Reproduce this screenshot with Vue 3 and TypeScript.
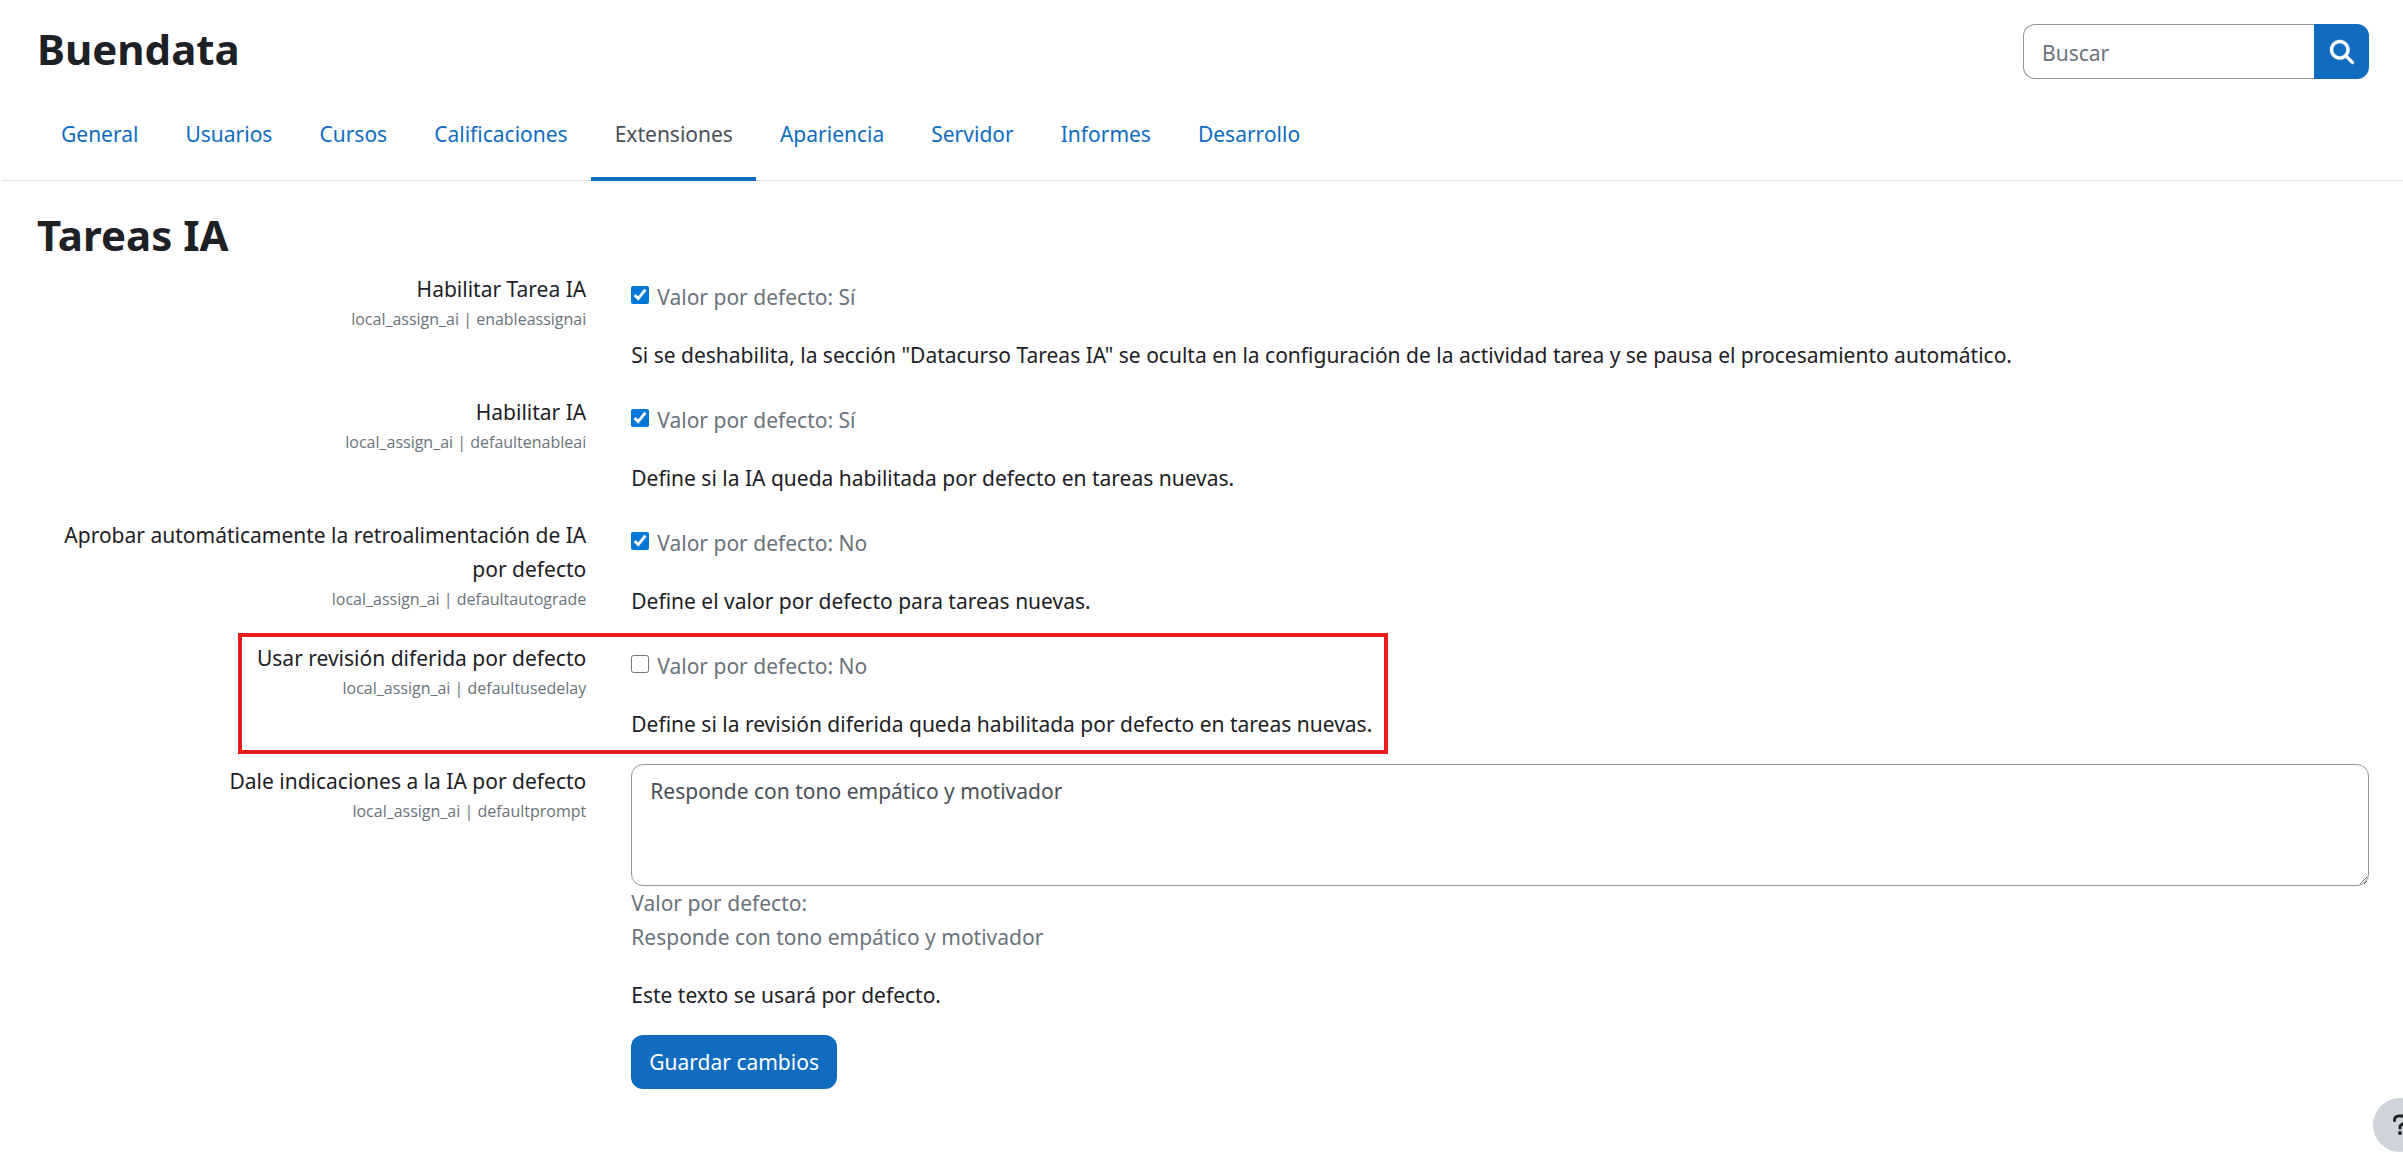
<script setup lang="ts">
import { ref } from 'vue'

interface NavItem {
  label: string
  active?: boolean
}

interface CheckSetting {
  name: string
  title: string
  checked: boolean
  fallback: string
  description: string
  highlighted?: boolean
}

const navItems: NavItem[] = [
  { label: 'General' },
  { label: 'Usuarios' },
  { label: 'Cursos' },
  { label: 'Calificaciones' },
  { label: 'Extensiones', active: true },
  { label: 'Apariencia' },
  { label: 'Servidor' },
  { label: 'Informes' },
  { label: 'Desarrollo' },
]

const settings = ref<CheckSetting[]>([
  {
    name: 'enableassignai',
    title: 'Habilitar Tarea IA',
    checked: true,
    fallback: 'Sí',
    description:
      'Si se deshabilita, la sección "Datacurso Tareas IA" se oculta en la configuración de la actividad tarea y se pausa el procesamiento automático.',
  },
  {
    name: 'defaultenableai',
    title: 'Habilitar IA',
    checked: true,
    fallback: 'Sí',
    description: 'Define si la IA queda habilitada por defecto en tareas nuevas.',
  },
  {
    name: 'defaultautograde',
    title: 'Aprobar automáticamente la retroalimentación de IA por defecto',
    checked: true,
    fallback: 'No',
    description: 'Define el valor por defecto para tareas nuevas.',
  },
  {
    name: 'defaultusedelay',
    title: 'Usar revisión diferida por defecto',
    checked: false,
    fallback: 'No',
    description: 'Define si la revisión diferida queda habilitada por defecto en tareas nuevas.',
    highlighted: true,
  },
])

const search = ref('')
const prompt = ref('Responde con tono empático y motivador')
</script>

<template>
  <div class="page">
    <header class="header">
      <h1 class="heading">Buendata</h1>
      <form class="search" role="search" @submit.prevent>
        <input v-model="search" class="search-input" type="text" placeholder="Buscar" aria-label="Buscar" />
        <button class="search-button" type="submit" aria-label="Buscar">
          <svg viewBox="0 0 512 512" width="24" height="24" aria-hidden="true">
            <path
              fill="currentColor"
              stroke="currentColor"
              stroke-width="10"
              d="M416 208c0 45.900-14.900 88.300-40 122.700L502.600 457.400c12.500 12.500 12.500 32.800 0 45.300s-32.800 12.500-45.300 0L330.700 376c-34.400 25.200-76.800 40-122.700 40C93.100 416 0 322.900 0 208S93.100 0 208 0S416 93.100 416 208zM208 352a144 144 0 1 0 0-288 144 144 0 1 0 0 288z"
            />
          </svg>
        </button>
      </form>
    </header>

    <nav class="tabs">
      <a
        v-for="item in navItems"
        :key="item.label"
        href="#"
        class="tab"
        :class="{ active: item.active }"
        :aria-current="item.active ? 'page' : undefined"
        >{{ item.label }}</a
      >
    </nav>

    <main class="main">
      <h2 class="heading">Tareas IA</h2>
      <form class="form" @submit.prevent>
        <div v-for="item in settings" :key="item.name" class="row">
          <div class="label-cell">
            <label :for="item.name">{{ item.title }}</label>
            <span class="key">local_assign_ai | {{ item.name }}</span>
          </div>
          <div class="value-cell">
            <div class="check-line">
              <input :id="item.name" v-model="item.checked" class="check" type="checkbox" />
              <span>Valor por defecto: {{ item.fallback }}</span>
            </div>
            <p class="description">{{ item.description }}</p>
          </div>
          <div v-if="item.highlighted" class="highlight"></div>
        </div>

        <div class="row">
          <div class="label-cell">
            <label for="defaultprompt">Dale indicaciones a la IA por defecto</label>
            <span class="key">local_assign_ai | defaultprompt</span>
          </div>
          <div class="value-cell">
            <textarea id="defaultprompt" v-model="prompt" class="prompt"></textarea>
            <div class="default-text">Valor por defecto:<br />Responde con tono empático y motivador</div>
            <p class="description">Este texto se usará por defecto.</p>
            <button class="save" type="submit">Guardar cambios</button>
          </div>
        </div>
      </form>
    </main>

    <button class="help" type="button" aria-label="Ayuda">
      <svg viewBox="0 0 14 22" width="14" height="22" aria-hidden="true">
        <path
          d="M1.500 6.500V6a4 4 0 0 1 4-4h3a4 4 0 0 1 2 7.500L8.200 10.900A2.400 2.400 0 0 0 7 13v1"
          fill="none"
          stroke="currentColor"
          stroke-width="3"
          stroke-linecap="round"
          stroke-linejoin="round"
        />
        <circle cx="7" cy="19" r="2" fill="currentColor" />
      </svg>
    </button>
  </div>
</template>

<style>
body {
  margin: 0;
  background: #fff;
}
</style>

<style scoped>
.page {
  position: relative;
  min-height: 100vh;
  overflow: hidden;
  color: #1d2125;
  font-family: 'Noto Sans', 'Open Sans', sans-serif;
  font-size: 21px;
  line-height: 34px;
}

.page * {
  box-sizing: border-box;
}

.page button,
.page input,
.page textarea {
  font-family: inherit;
  font-size: inherit;
}

.header {
  display: flex;
  justify-content: space-between;
  align-items: flex-start;
  padding: 22px 34px 0 37px;
}

.heading {
  margin: 0;
  font-size: 42px;
  font-weight: 700;
  line-height: 54px;
}

.search {
  display: flex;
  width: 346px;
  height: 55px;
  margin-top: 2px;
}

.search-input {
  flex: 1;
  min-width: 0;
  padding: 2px 18px 0;
  border: 1px solid #8f959e;
  border-right: 0;
  border-radius: 12px 0 0 12px;
  background: #fff;
  color: #495057;
}

.search-input::placeholder {
  color: #6a737b;
  opacity: 1;
}

.search-button {
  display: flex;
  align-items: center;
  justify-content: center;
  width: 55px;
  padding: 0;
  border: 0;
  border-radius: 0 12px 12px 0;
  background: #0f6cbf;
  color: #fff;
}

.search-button svg {
  overflow: visible;
}

.tabs {
  display: flex;
  margin: 9px 0 0 2px;
  padding-left: 35px;
  border-bottom: 1px solid #dee2e6;
}

.tab {
  height: 93px;
  margin-bottom: -1px;
  padding: 29px 23px 0 24px;
  border-bottom: 4px solid transparent;
  color: #0f6cbf;
  text-decoration: none;
}

.tab.active {
  border-bottom-color: #0f6cbf;
  color: #495057;
}

.main {
  padding: 27px 12px 48px 14px;
}

.main .heading {
  padding-left: 23px;
}

.form {
  display: flex;
  flex-direction: column;
  padding-top: 10px;
}

.row {
  position: relative;
  display: grid;
  grid-template-columns: 1fr 3fr;
}

.label-cell {
  display: flex;
  flex-direction: column;
  padding: 0 22px 0 23px;
  text-align: right;
}

.key {
  color: #6a737b;
  font-family: 'Open Sans', 'Noto Sans', sans-serif;
  font-size: 16px;
  line-height: 26px;
}

.value-cell {
  min-width: 0;
  padding: 0 22px 0 23px;
}

.check-line {
  display: flex;
  align-items: flex-start;
  gap: 8px;
  padding-top: 8px;
  color: #6a737b;
}

.check {
  width: 18px;
  height: 18px;
  margin: 6px 0 0;
  accent-color: #0078d7;
}

.description {
  margin: 24px 0 23px;
}

.highlight {
  position: absolute;
  top: -8px;
  left: 224px;
  width: 1150px;
  height: 121px;
  border: 4px solid #e81c1c;
  pointer-events: none;
}

.prompt {
  display: block;
  width: 100%;
  height: 122px;
  padding: 9px 18px;
  border: 1px solid #8f959e;
  border-radius: 12px;
  background: #fff;
  color: #495057;
  line-height: 34px;
  resize: vertical;
}

.default-text {
  color: #6a737b;
}

.save {
  display: block;
  height: 54px;
  padding: 0 18px;
  border: 0;
  border-radius: 12px;
  background: #0f6cbf;
  color: #fff;
}

.help {
  position: absolute;
  right: -24px;
  bottom: 8px;
  display: flex;
  align-items: center;
  justify-content: center;
  width: 54px;
  height: 54px;
  padding: 0;
  border: 0;
  border-radius: 50%;
  background: #ced4da;
  color: #1d2125;
}
</style>
